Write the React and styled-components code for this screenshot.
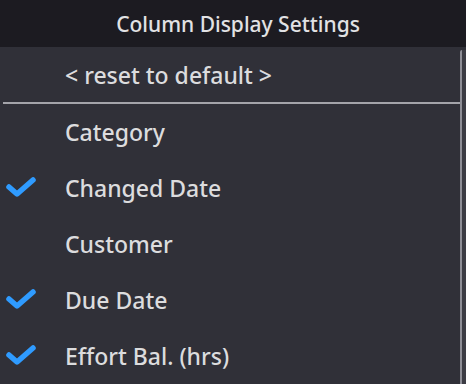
import { styled, createGlobalStyle } from "styled-components";

const GlobalStyle = createGlobalStyle`
  html, body {
    margin: 0;
    padding: 0;
    background: #303038;
  }
  body {
    font-family: "Noto Sans", "Open Sans", sans-serif;
  }
`;

const columns = [
  { name: "Category", checked: false },
  { name: "Changed Date", checked: true },
  { name: "Customer", checked: false },
  { name: "Due Date", checked: true },
  { name: "Effort Bal. (hrs)", checked: true },
];

const CheckIcon = () => (
  <svg width="32" height="24" viewBox="0 0 32 24">
    <polyline
      points="4,11 12,18 28,4"
      fill="none"
      stroke="#2f9bff"
      strokeWidth="5.5"
      strokeLinecap="round"
      strokeLinejoin="round"
    />
  </svg>
);

const App = () => {
  return (
    <>
      <GlobalStyle />
      <Panel>
        <Header>Column Display Settings</Header>
        <Body>
          <List>
            <ResetRow>&lt; reset to default &gt;</ResetRow>
            <Divider />
            {columns.map((col) => (
              <Row key={col.name}>
                <IconCell>{col.checked && <CheckIcon />}</IconCell>
                <Label>{col.name}</Label>
              </Row>
            ))}
          </List>
          <Scrollbar />
        </Body>
      </Panel>
    </>
  );
};

const Panel = styled.div`
  width: 466px;
  height: 384px;
  display: flex;
  flex-direction: column;
  overflow: hidden;
  background: #303038;
`;

const Header = styled.div`
  height: 47px;
  flex-shrink: 0;
  background: #1c1b21;
  color: #e2e2e4;
  font-size: 21px;
  font-weight: 500;
  display: flex;
  align-items: center;
  justify-content: center;
  padding-left: 10px;
`;

const Body = styled.div`
  flex: 1;
  display: flex;
`;

const List = styled.div`
  flex: 1;
  display: flex;
  flex-direction: column;
`;

const ResetRow = styled.div`
  height: 55px;
  display: flex;
  align-items: center;
  padding-left: 65px;
  color: #dcdcde;
  font-size: 23px;
  font-weight: 500;
`;

const Divider = styled.div`
  height: 2px;
  margin-left: 3px;
  background: #a4a4aa;
`;

const Row = styled.div`
  height: 56px;
  flex-shrink: 0;
  display: flex;
  align-items: center;
`;

const IconCell = styled.div`
  width: 65px;
  display: flex;
  align-items: center;
  padding-left: 5px;
  box-sizing: border-box;
`;

const Label = styled.span`
  color: #dcdcde;
  font-size: 23px;
  font-weight: 500;
`;

const Scrollbar = styled.div`
  width: 4px;
  margin-top: 3px;
  border-left: 2px solid #8e8e96;
  border-top-left-radius: 2px;
  background: #3c3c44;
`;

export default App;
